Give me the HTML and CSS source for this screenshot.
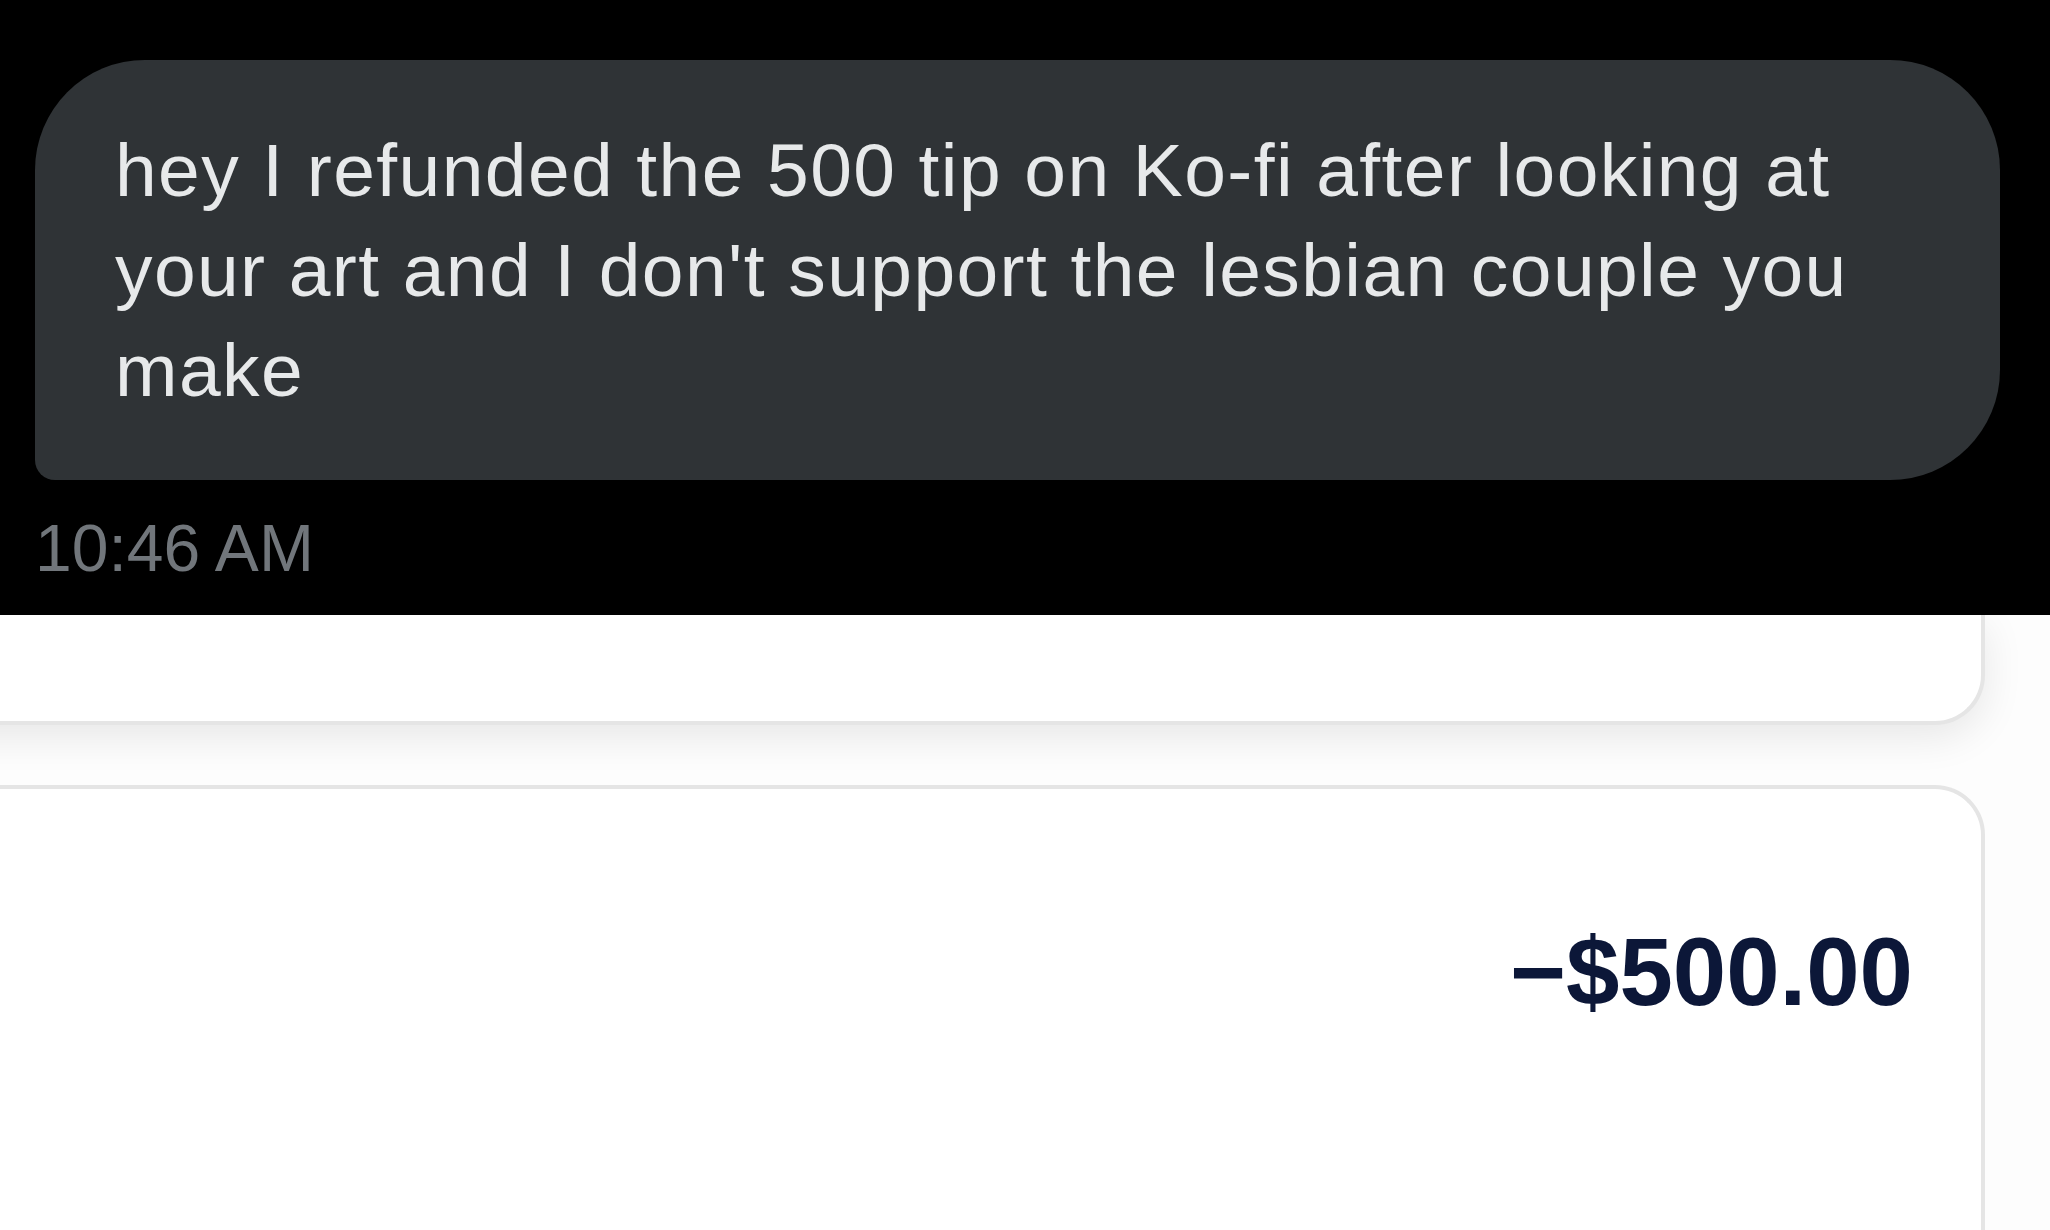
FILE: index.html
```html
<!DOCTYPE html>
<html lang="en">
<head>
<meta charset="utf-8">
<title>DM</title>
<link rel="stylesheet" href="styles.css">
</head>
<body>
<section class="dm">
  <div class="bubble">hey I refunded the 500 tip on Ko-fi after looking at your art and I don't support the lesbian couple you make</div>
  <div class="time">10:46 AM</div>
</section>
<section class="cards">
  <div class="card card-top"></div>
  <div class="card card-amount">
    <div class="amount">−$500.00</div>
  </div>
</section>
</body>
</html>
```
FILE: styles.css
```css
html, body {
  margin: 0;
  padding: 0;
}
body {
  width: 2050px;
  height: 1230px;
  overflow: hidden;
  background: #fdfdfd;
  font-family: "Liberation Sans", Arial, sans-serif;
}
.dm {
  box-sizing: border-box;
  height: 615px;
  background: #000;
  padding: 60px 0 0 35px;
  position: relative;
  z-index: 2;
}
.bubble {
  box-sizing: border-box;
  width: 1965px;
  background: #2f3336;
  color: #e7e9ea;
  font-size: 75px;
  line-height: 100px;
  letter-spacing: 1.4px;
  padding: 60px 80px 60px 80px;
  border-radius: 110px 110px 110px 20px;
}
.time {
  margin-top: 28px;
  color: #71767b;
  font-size: 66px;
  line-height: 80px;
}
.cards {
  display: flex;
  flex-direction: column;
  gap: 60px;
  margin-left: -100px;
  width: 2085px;
}
.card {
  box-sizing: border-box;
  background: #fff;
  border: 4px solid #e5e5e5;
}
.card-top {
  height: 110px;
  border-top: none;
  border-left: none;
  border-bottom-right-radius: 50px;
  box-shadow: 0 12px 40px rgba(0, 0, 0, 0.09);
}
.card-amount {
  height: 445px;
  border-bottom: none;
  border-left: none;
  border-top-right-radius: 50px;
  padding: 128px 68px 0 0;
  display: flex;
  justify-content: flex-end;
  align-items: flex-start;
}
.amount {
  font-size: 96px;
  line-height: 110px;
  font-weight: 700;
  color: #0c1738;
}
```
